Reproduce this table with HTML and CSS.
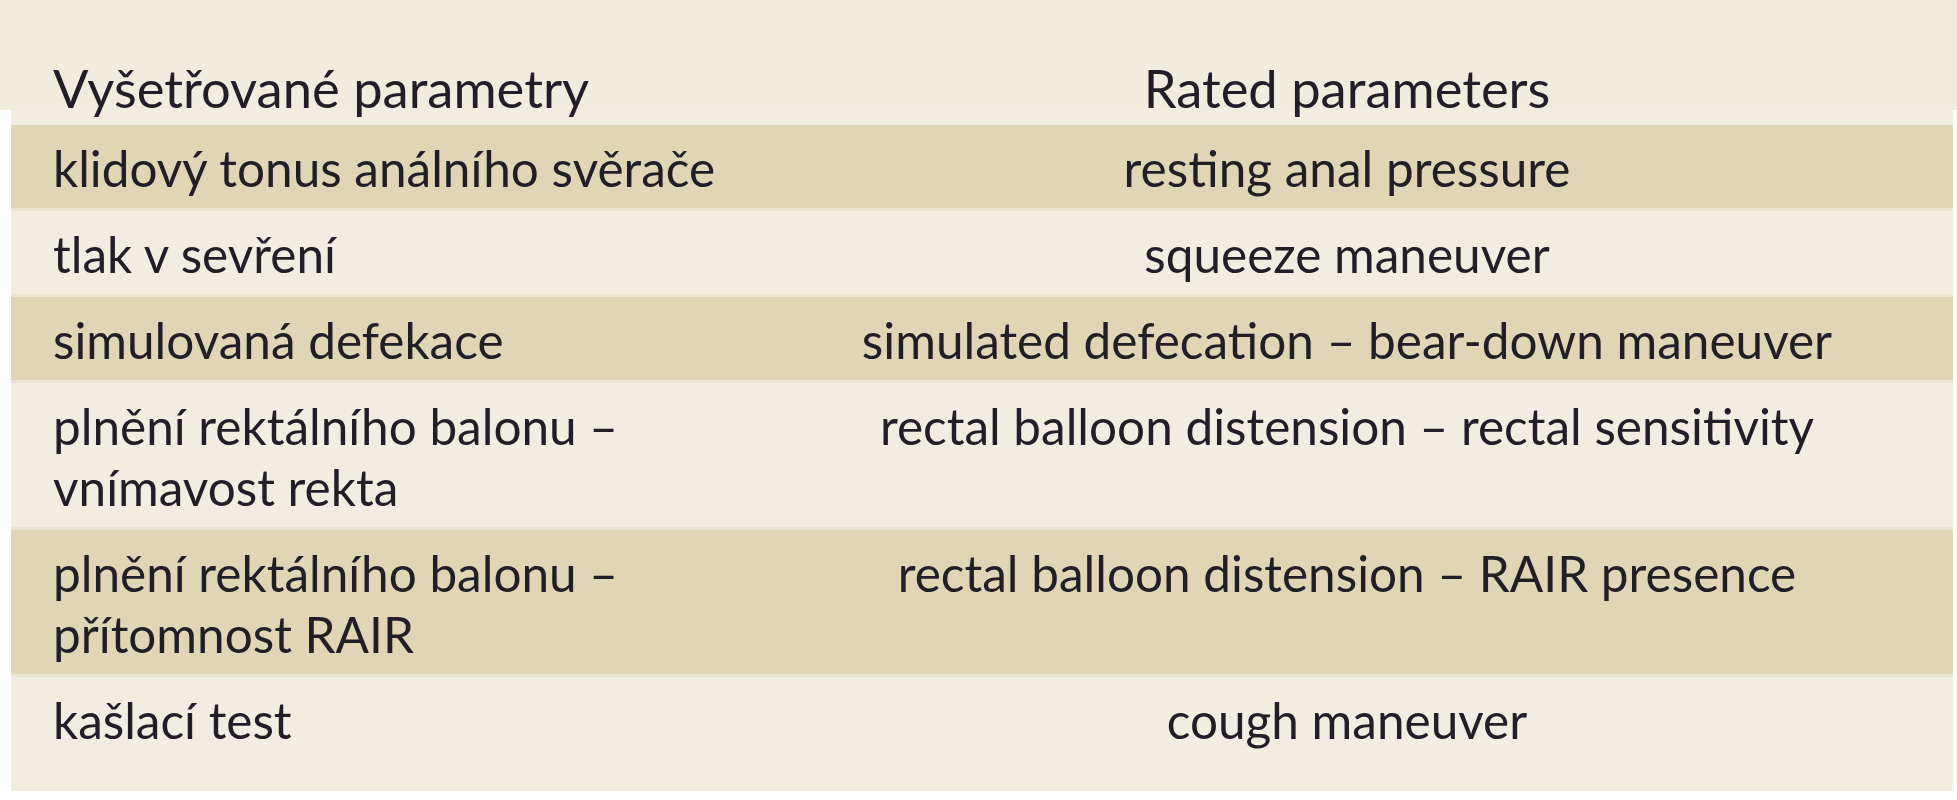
FILE: index.html
```html
<!DOCTYPE html>
<html lang="cs">
<head>
<meta charset="utf-8">
<title>Vyšetřované parametry</title>
<link rel="stylesheet" href="styles.css">
</head>
<body>
<div class="sheet">
  <div class="head">
    <div class="c1">Vyšetřované parametry</div>
    <div class="c2">Rated parameters</div>
  </div>
  <div class="panel">
    <div class="row dark">
      <div class="c1">klidový tonus análního svěrače</div>
      <div class="c2">resting anal pressure</div>
    </div>
    <div class="row">
      <div class="c1">tlak v sevření</div>
      <div class="c2">squeeze maneuver</div>
    </div>
    <div class="row dark">
      <div class="c1">simulovaná defekace</div>
      <div class="c2">simulated defecation – bear-down maneuver</div>
    </div>
    <div class="row">
      <div class="c1">plnění rektálního balonu –<br>vnímavost rekta</div>
      <div class="c2">rectal balloon distension – rectal sensitivity</div>
    </div>
    <div class="row dark">
      <div class="c1">plnění rektálního balonu –<br>přítomnost RAIR</div>
      <div class="c2">rectal balloon distension – RAIR presence</div>
    </div>
    <div class="row last">
      <div class="c1">kašlací test</div>
      <div class="c2">cough maneuver</div>
    </div>
  </div>
</div>
</body>
</html>
```

FILE: styles.css
```css
html, body {
  margin: 0;
  padding: 0;
  background: #ffffff;
}

body {
  width: 1957px;
  height: 800px;
  overflow: hidden;
  font-family: Lato, "Open Sans", sans-serif;
  font-size: 49.5px;
  color: #211e28;
}

.sheet {
  display: flex;
  flex-direction: column;
}

.head {
  position: relative;
  z-index: 1;
  display: grid;
  grid-template-columns: 730px 1fr;
  height: 110px;
  box-sizing: border-box;
  padding: 66px 4px 0 11px;
  font-size: 52.5px;
  line-height: 44px;
  background: #f0ecde;
}

.panel {
  margin: 0 4px 0 11px;
  padding-top: 15px;
  background: #f1ede0;
  display: flex;
  flex-direction: column;
}

.row {
  display: grid;
  grid-template-columns: 730px 1fr;
  line-height: 61px;
  padding: 13px 0 9px;
  border-bottom: 3px solid #eae4d1;
}

.row.dark {
  background: #e0d6b6;
}

.row.last {
  border-bottom: 0;
  padding-bottom: 40px;
}

.c1 {
  padding-left: 42px;
  white-space: nowrap;
}

.c2 {
  text-align: center;
  white-space: nowrap;
}
```
